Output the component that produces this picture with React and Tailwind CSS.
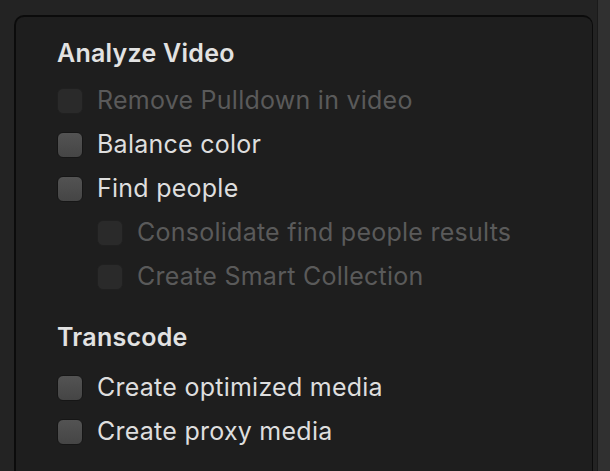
// Analyze & transcode import options panel (dark)

function Checkbox({ disabled }) {
  return (
    <div
      className={
        disabled
          ? "h-[26px] w-[26px] shrink-0 rounded-[6px] border border-[#202020] bg-[#2a2a2a]"
          : "h-[26px] w-[26px] shrink-0 rounded-[6px] border border-[#161616] bg-gradient-to-b from-[#535353] to-[#454545]"
      }
    />
  );
}

function Row({ label, disabled, indent }) {
  return (
    <div className={`flex h-[44px] items-center gap-[14px] ${indent ? "pl-[40px]" : ""}`}>
      <Checkbox disabled={disabled} />
      <span className={disabled ? "text-[#5a5a5a]" : "text-[#dedede]"}>{label}</span>
    </div>
  );
}

function Heading({ children, className = "" }) {
  return (
    <div className={`flex h-[40px] items-center font-semibold text-[#e2e2e2] ${className}`}>
      {children}
    </div>
  );
}

export default function App() {
  return (
    <div
      className="flex h-[471px] w-[610px] overflow-hidden bg-[#232323] text-[25px] tracking-[0.01em]"
      style={{ fontFamily: "Inter, 'Noto Sans', sans-serif" }}
    >
      <div className="flex flex-1 flex-col pl-[14px] pr-[4px] pt-[15px]">
        <div className="flex-1 rounded-t-[10px] border-2 border-b-0 border-r border-[#0b0b0b] bg-[#1e1e1e] pl-[41px] pt-[17px]">
          <Heading>Analyze Video</Heading>
          <div className="mt-[5px] flex flex-col">
            <Row label="Remove Pulldown in video" disabled />
            <Row label="Balance color" />
            <Row label="Find people" />
            <Row label="Consolidate find people results" disabled indent />
            <Row label="Create Smart Collection" disabled indent />
          </div>
          <Heading className="mt-[19px]">Transcode</Heading>
          <div className="mt-[8px] flex flex-col">
            <Row label="Create optimized media" />
            <Row label="Create proxy media" />
          </div>
        </div>
      </div>
      <div className="w-[13px] border-l border-[#1a1a1a] bg-[#303030]" />
    </div>
  );
}
